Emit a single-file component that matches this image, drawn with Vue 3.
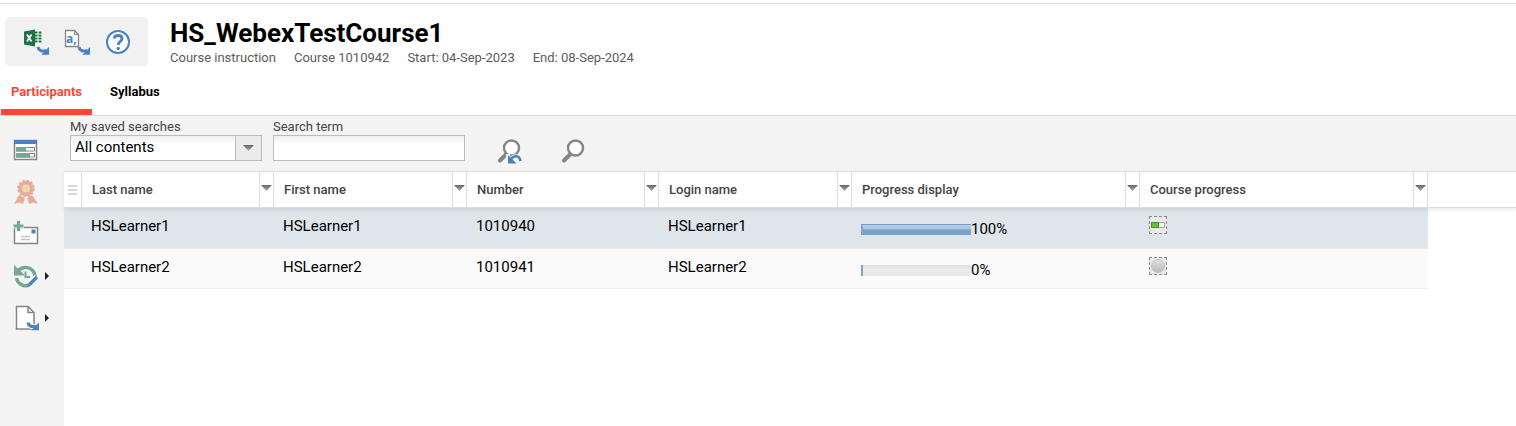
<template>
  <div class="page">
    <header class="header">
      <div class="actions">
        <button class="icon-btn" aria-label="Export to Excel">
          <svg width="26" height="26" viewBox="0 0 26 26">
            <path d="M11 2h7.500v13H11z" fill="#fff" />
            <path d="M12 3.500h2.500M15.500 3.500h3M12 6.500h2.500M15.500 6.500h3M12 9.500h2.500M15.500 9.500h3M12 12.500h2.500M15.500 12.500h3" stroke="#217346" stroke-width="2" />
            <path d="M1 2.500L12 .5v17L1 15.500z" fill="#1e7345" />
            <path d="M4 5.500l4.500 7M8.500 5.500L4 12.500" stroke="#fff" stroke-width="1.800" />
            <path d="M15 18c.5 3.500 4 5 8 3.500" fill="none" stroke="#4a82bd" stroke-width="3" />
            <path d="M26 18v7.700h-7.700z" fill="#4a82bd" />
          </svg>
        </button>
        <button class="icon-btn" aria-label="Export as text">
          <svg width="26" height="26" viewBox="0 0 26 26">
            <path d="M1.500 1.500h9l4 4v12h-13z" fill="#fff" stroke="#858585" stroke-width="1.300" />
            <path d="M10.500 1.500v4h4" fill="none" stroke="#858585" />
            <text x="2" y="14" class="glyph-a">a,</text>
            <path d="M15 18c.5 3.500 4 5 8 3.500" fill="none" stroke="#4a82bd" stroke-width="3" />
            <path d="M26 18v7.700h-7.700z" fill="#4a82bd" />
          </svg>
        </button>
        <button class="icon-btn" aria-label="Help">
          <svg width="26" height="26" viewBox="0 0 26 26">
            <circle cx="13" cy="13" r="11" fill="#fff" stroke="#4a82bd" stroke-width="2" />
            <path d="M9.200 9.500c.3-4 7.800-4 7.800 0 0 3-3.800 3-3.800 6.500" fill="none" stroke="#4a82bd" stroke-width="2.800" />
            <circle cx="13.200" cy="19.500" r="1.700" fill="#4a82bd" />
          </svg>
        </button>
      </div>
      <div class="heading">
        <h1>HS_WebexTestCourse1</h1>
        <p class="meta">
          <span v-for="item in meta" :key="item">{{ item }}</span>
        </p>
      </div>
    </header>

    <nav class="tabs">
      <a
        v-for="tab in tabs"
        :key="tab"
        href="#"
        class="tab"
        :class="{ active: activeTab === tab }"
        @click.prevent="activeTab = tab"
      >{{ tab }}</a>
    </nav>

    <div class="body">
      <aside class="sidebar">
        <button class="side-btn" aria-label="Edit progress">
          <svg width="26" height="26" viewBox="0 0 26 26">
            <path d="M1.500 3.500h22v19h-22z" fill="#fff" stroke="#858585" stroke-width="1.500" />
            <path d="M1 3h23v4H1z" fill="#4a82bd" />
            <path d="M3.500 10.500h18v3.500h-18zM3.500 16.500h18V20h-18z" fill="#fff" stroke="#858585" />
            <path d="M3 10h10v4.500H3zM3 16h14v4.500H3z" fill="#74a894" />
          </svg>
        </button>
        <button class="side-btn" aria-label="Certificate">
          <svg width="26" height="26" viewBox="0 0 26 26">
            <path d="M6 16L1 25l5-1.500L10 25l2-6zM19 16l6 9-5-1.500L16 25l-2-6z" fill="#e8ac9b" />
            <circle cx="13" cy="9.500" r="7.800" fill="#e8ac9b" stroke="#e8ac9b" stroke-width="2" stroke-dasharray="2.400 1.700" />
            <circle cx="13" cy="9.500" r="4" fill="#f0d6ac" />
          </svg>
        </button>
        <button class="side-btn" aria-label="Add message">
          <svg width="26" height="26" viewBox="0 0 26 26">
            <path d="M1.500 6.500h23v16h-23z" fill="#fff" stroke="#858585" stroke-width="1.500" />
            <path d="M18.500 8.500h4v4h-4z" fill="#4a82bd" />
            <path d="M8 15.500h9M8 18.500h9" stroke="#c4c4c4" stroke-width="1.500" />
            <path d="M5.500 0v11M0 5h11" stroke="#f4f4f4" stroke-width="5" />
            <path d="M5.500 0v10M.5 5h10" stroke="#74a894" stroke-width="3.200" />
          </svg>
        </button>
        <button class="side-btn" aria-label="Edit history">
          <svg width="26" height="26" viewBox="0 0 26 26">
            <path d="M5 8A9.300 9.300 0 1 1 20 20M15 22.500A9.500 9.500 0 0 1 3.500 15" fill="none" stroke="#74a894" stroke-width="3.400" />
            <path d="M1 2v10.500h11L8.500 9z" fill="#74a894" />
            <path d="M12.500 8.500V14H17" fill="none" stroke="#74a894" stroke-width="2" />
            <path d="M16.500 21.500L24 14" stroke="#f4f4f4" stroke-width="6" />
            <path d="M16.500 21.500L24 14" stroke="#4a82bd" stroke-width="3.200" />
            <path d="M14 24l1-4 3 3z" fill="#4a82bd" />
          </svg>
          <i class="flyout"></i>
        </button>
        <button class="side-btn" aria-label="Export document">
          <svg width="26" height="26" viewBox="0 0 26 26">
            <path d="M3.500 1.500H15l6 6V24H3.500z" fill="#fff" stroke="#858585" stroke-width="1.500" />
            <path d="M15 1.500v6h6" fill="none" stroke="#858585" stroke-width="1.500" />
            <path d="M15 17.500c.5 3.500 4 5 8 3.500" fill="none" stroke="#f4f4f4" stroke-width="5" />
            <path d="M15 17.500c.5 3.500 4 5 8 3.500" fill="none" stroke="#4a82bd" stroke-width="3" />
            <path d="M26 17.500v7.700h-7.700z" fill="#4a82bd" />
          </svg>
          <i class="flyout"></i>
        </button>
      </aside>

      <main class="content">
        <form class="search" @submit.prevent>
          <div class="field">
            <label for="saved">My saved searches</label>
            <div class="select-box">
              <select id="saved" v-model="saved">
                <option>All contents</option>
              </select>
              <span class="select-arrow"><i class="caret"></i></span>
            </div>
          </div>
          <div class="field">
            <label for="term">Search term</label>
            <input id="term" v-model="term" type="text" />
          </div>
          <div class="search-buttons">
            <button type="reset" class="icon-btn" aria-label="Reset search">
              <svg width="26" height="26" viewBox="0 0 26 26">
                <path d="M9.500 15L3 21.500" stroke="#858585" stroke-width="4" stroke-linecap="round" />
                <circle cx="14.500" cy="9" r="7.500" fill="#fff" stroke="#858585" stroke-width="2.400" />
                <path d="M14.500 20c2-4 7-4 9 1.500M11 15v9h8" fill="none" stroke="#f4f4f4" stroke-width="4" />
                <path d="M14.500 20c2-4 8-4 9 2" fill="none" stroke="#4a82bd" stroke-width="2.600" />
                <path d="M11 16v8.500h8.500z" fill="#4a82bd" />
              </svg>
            </button>
            <button type="submit" class="icon-btn" aria-label="Search">
              <svg width="26" height="26" viewBox="0 0 26 26">
                <path d="M9.500 15L3 21.500" stroke="#858585" stroke-width="4" stroke-linecap="round" />
                <circle cx="14.500" cy="9" r="7.500" fill="#fff" stroke="#858585" stroke-width="2.400" />
              </svg>
            </button>
          </div>
        </form>

        <table class="grid">
          <colgroup>
            <col class="c-grip" />
            <col v-for="col in columns" :key="col.name" :class="col.size" />
            <col />
          </colgroup>
          <thead>
            <tr>
              <th><span class="grip"></span></th>
              <th v-for="col in columns" :key="col.name">
                <div class="th-inner">
                  <span class="th-label">{{ col.name }}</span>
                  <button class="th-menu" :aria-label="'Menu for ' + col.name"><i class="caret"></i></button>
                </div>
              </th>
              <th class="rest"></th>
            </tr>
          </thead>
          <tbody>
            <tr v-for="row in rows" :key="row.number" :class="{ selected: row.number === selected }" @click="selected = row.number">
              <td></td>
              <td>{{ row.last }}</td>
              <td>{{ row.first }}</td>
              <td>{{ row.number }}</td>
              <td>{{ row.login }}</td>
              <td>
                <div class="progress">
                  <span class="bar"><span class="fill" :style="{ width: row.progress + '%' }"></span></span>
                  <span>{{ row.progress }}%</span>
                </div>
              </td>
              <td>
                <span class="status">
                  <svg v-if="row.progress > 0" width="16" height="16" viewBox="0 0 16 16">
                    <path d="M1.500 5.500h13v5h-13z" fill="#fff" stroke="#a5a5a5" />
                    <path d="M1.500 5.500h7v5h-7z" fill="#5fc23c" stroke="#35980f" />
                  </svg>
                  <svg v-else width="16" height="16" viewBox="0 0 16 16">
                    <defs>
                      <linearGradient id="ball" x1="0" y1="0" x2="0" y2="1">
                        <stop offset="0" stop-color="#e2e2e2" />
                        <stop offset="1" stop-color="#b8b8b8" />
                      </linearGradient>
                    </defs>
                    <circle cx="8" cy="8" r="6.500" fill="url(#ball)" stroke="#c2c2c2" />
                  </svg>
                </span>
              </td>
              <td class="rest"></td>
            </tr>
          </tbody>
        </table>
      </main>
    </div>
  </div>
</template>

<script setup>
import { ref } from 'vue'

const meta = ['Course instruction', 'Course 1010942', 'Start: 04-Sep-2023', 'End: 08-Sep-2024']
const tabs = ['Participants', 'Syllabus']
const activeTab = ref('Participants')

const saved = ref('All contents')
const term = ref('')

const columns = [
  { name: 'Last name', size: 'c-even' },
  { name: 'First name', size: 'c-odd' },
  { name: 'Number', size: 'c-even' },
  { name: 'Login name', size: 'c-odd' },
  { name: 'Progress display', size: 'c-wide' },
  { name: 'Course progress', size: 'c-wide' }
]

const rows = [
  { last: 'HSLearner1', first: 'HSLearner1', number: '1010940', login: 'HSLearner1', progress: 100 },
  { last: 'HSLearner2', first: 'HSLearner2', number: '1010941', login: 'HSLearner2', progress: 0 }
]
const selected = ref('1010940')
</script>

<style>
body {
  background: #fff;
}

#app {
  display: flex;
  min-height: 100vh;
}
</style>

<style scoped>
.page {
  flex: 1;
  min-width: 0;
  display: flex;
  flex-direction: column;
  padding-top: 3px;
  font-family: Roboto, "Liberation Sans", sans-serif;
  font-size: 15px;
  color: #000;
}

button {
  border: 0;
  padding: 0;
  background: none;
  cursor: pointer;
}

svg {
  display: block;
}

/* HEADER */
.header {
  display: flex;
  gap: 22px;
  padding: 13px 5px 0;
  border-top: 1px solid #dcdcdc;
}

.actions {
  display: flex;
  align-items: center;
  gap: 15px;
  box-sizing: border-box;
  height: 49px;
  padding: 0 17px 0 18px;
  background: #f1f1f1;
  border-radius: 5px;
}

.glyph-a {
  font: bold 12px "Open Sans", sans-serif;
  fill: #4a82bd;
}

h1 {
  margin: 0;
  font-size: 26px;
  line-height: 32px;
  font-weight: 700;
}

.meta {
  display: flex;
  gap: 18px;
  margin: 0;
  font-size: 13px;
  line-height: 18px;
  color: #5c5c5c;
}

/* TABS */
.tabs {
  display: flex;
  gap: 8px;
  padding: 7px 1px 0;
  border-bottom: 1px solid #dcdcdc;
}

.tab {
  padding: 8px 10px 7px;
  border-bottom: 6px solid transparent;
  font-size: 13px;
  line-height: 20px;
  font-weight: 700;
  color: #000;
  text-decoration: none;
}

.tab.active {
  color: #ff4636;
  border-bottom-color: #ff4636;
}

/* SIDEBAR */
.body {
  flex: 1;
  display: flex;
}

.sidebar {
  width: 64px;
  box-sizing: border-box;
  display: flex;
  flex-direction: column;
  gap: 16px;
  padding: 21px 13px 0;
  background: #f4f4f4;
}

.side-btn {
  display: flex;
  align-items: center;
  gap: 6px;
}

.flyout {
  border: 4px solid transparent;
  border-left-color: #222;
  border-right: 0;
}

/* SEARCH */
.content {
  flex: 1;
  min-width: 0;
}

.search {
  display: flex;
  gap: 11px;
  box-sizing: border-box;
  height: 55px;
  padding: 3px 6px 0;
  background: #f4f4f4;
}

.field {
  width: 192px;
}

.field label {
  display: block;
  font-size: 13px;
  line-height: 16px;
  color: #444;
}

.select-box {
  position: relative;
}

.field select,
.field input {
  display: block;
  box-sizing: border-box;
  width: 100%;
  height: 26px;
  margin: 0;
  padding: 0 4px 2px;
  border: 1px solid #bcbcbc;
  border-radius: 0;
  background: linear-gradient(#eef0f0, #fff 8px);
  font: 15px Roboto, "Liberation Sans", sans-serif;
  color: #000;
  appearance: none;
}

.select-arrow {
  position: absolute;
  top: 1px;
  right: 1px;
  bottom: 1px;
  width: 25px;
  display: flex;
  align-items: center;
  justify-content: center;
  border-left: 1px solid #bcbcbc;
  background: #ebebeb;
  pointer-events: none;
}

.caret {
  width: 11px;
  height: 6px;
  background: linear-gradient(#666, #aaa);
  clip-path: polygon(0 0, 100% 0, 50% 100%);
}

.search-buttons {
  display: flex;
  align-items: flex-start;
  gap: 38px;
  padding: 20px 21px;
}

/* TABLE */
.grid {
  width: 100%;
  table-layout: fixed;
  border-collapse: separate;
  border-spacing: 0;
}

.c-grip {
  width: 18px;
}

.c-even {
  width: 192px;
}

.c-odd {
  width: 193px;
}

.c-wide {
  width: 288px;
}

thead {
  position: relative;
  box-shadow: 0 2px 5px rgba(0, 0, 0, 0.08);
}

th {
  height: 35px;
  padding: 0;
  border-top: 1px solid #dedede;
  border-right: 1px solid #dedede;
  border-bottom: 1px solid #dedede;
  background: #fff;
  font-size: 13px;
  font-weight: 500;
  color: #444;
}

th.rest {
  border-right: 0;
}

.grip {
  display: block;
  width: 9px;
  height: 10px;
  margin: 0 auto;
  background: repeating-linear-gradient(#d8d8d8 0 2px, #fff 2px 4px);
}

.th-inner {
  display: flex;
  height: 35px;
}

.th-label {
  flex: 1;
  padding-left: 10px;
  line-height: 35px;
  text-align: left;
}

.th-menu {
  width: 14px;
  display: flex;
  justify-content: center;
  padding-top: 13px;
  border-left: 1px solid #dedede;
}

td {
  height: 31px;
  padding: 8px 9px 0;
  border-bottom: 1px solid #ececec;
  background: #fafafa;
  line-height: 20px;
  vertical-align: top;
}

.selected td {
  height: 32px;
  background: #dee6ec;
}

td.rest {
  border-bottom: 0;
  background: none;
}

.progress {
  display: flex;
  align-items: center;
  padding-top: 3px;
}

.bar {
  box-sizing: border-box;
  width: 110px;
  height: 11px;
  background: linear-gradient(#dcdcdc, #ebebeb 4px, #e6e6e6);
  border-left: 2px solid #7fa5cc;
}

.fill {
  display: block;
  box-sizing: border-box;
  height: 11px;
  background: linear-gradient(#6f9bc4 1px, #bccfe4 1px, #a9c3de 5px, #7ba2c9 6px, #7ba2c9);
}

.status {
  display: block;
  width: 16px;
  height: 16px;
  border: 1px dashed #8a8a8a;
  background: #e9e9e9;
}
</style>
